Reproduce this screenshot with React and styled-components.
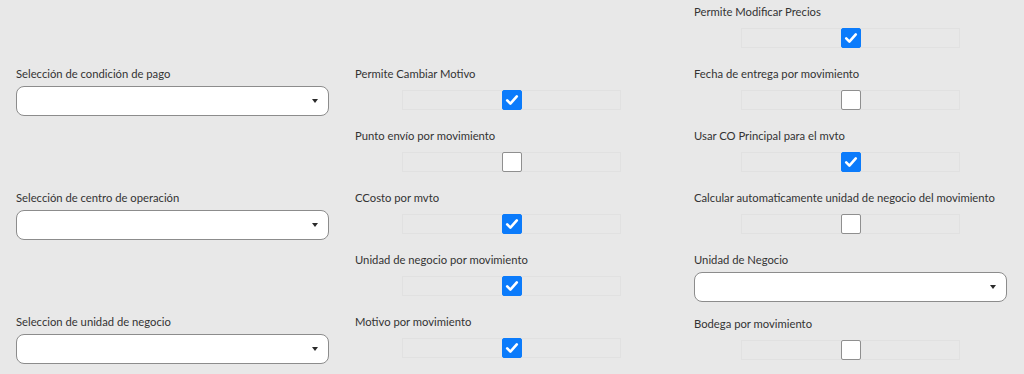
import { createGlobalStyle, styled } from "styled-components";

const GlobalStyle = createGlobalStyle`
  html, body {
    margin: 0;
    padding: 0;
    background: #e8e8e8;
  }
  body {
    font-family: Lato, "Liberation Sans", Arial, sans-serif;
    color: #333;
  }
`;

const Page = styled.div`
  display: grid;
  grid-template-columns: repeat(3, minmax(0, 1fr));
  column-gap: 26px;
  padding: 4px 17px 0 16px;
  height: 374px;
  box-sizing: border-box;
  overflow: hidden;
`;

const Column = styled.div`
  display: flex;
  flex-direction: column;
  min-width: 0;
  padding-top: ${(p) => p.$offset || 0}px;
`;

const Spacer = styled.div`
  height: ${(p) => p.$h}px;
  flex-shrink: 0;
`;

const Field = styled.div`
  display: flex;
  flex-direction: column;
  flex-shrink: 0;
  height: ${(p) => (p.$select ? 64 : 62)}px;
`;

const Label = styled.div`
  font-size: 11.25px;
  line-height: 16px;
  height: 16px;
  white-space: nowrap;
  color: #333;
  margin-bottom: ${(p) => (p.$select ? 4 : 8)}px;
`;

const CheckTrack = styled.div`
  width: 70%;
  height: 20px;
  margin: 0 auto;
  box-shadow: inset 0 0 0 1px #e1e1e1;
  display: flex;
  justify-content: center;
`;

const Box = styled.span`
  width: 20px;
  height: 20px;
  box-sizing: border-box;
  border-radius: 2px;
  display: flex;
  align-items: center;
  justify-content: center;
  background: ${(p) => (p.$checked ? "#0b7bfb" : "#ffffff")};
  border: 1px solid ${(p) => (p.$checked ? "#0b7bfb" : "#8f8f8f")};
`;

const SelectBox = styled.div`
  height: 30px;
  box-sizing: border-box;
  background: #fff;
  border: 1px solid #8c8c8c;
  border-radius: 8px;
  display: flex;
  align-items: center;
  justify-content: flex-end;
  padding-right: 10px;
`;

const Caret = styled.span`
  width: 0;
  height: 0;
  border-left: 3.5px solid transparent;
  border-right: 3.5px solid transparent;
  border-top: 4px solid #2a2a2a;
`;

function CheckField({ label, checked }) {
  return (
    <Field>
      <Label>{label}</Label>
      <CheckTrack>
        <Box $checked={checked}>
          {checked && (
            <svg width="14" height="14" viewBox="0 0 14 14">
              <path
                d="M2.2 7.4 L5.4 10.6 L11.8 3.4"
                fill="none"
                stroke="#fff"
                strokeWidth="2.6"
                strokeLinecap="round"
                strokeLinejoin="round"
              />
            </svg>
          )}
        </Box>
      </CheckTrack>
    </Field>
  );
}

function SelectField({ label }) {
  return (
    <Field $select>
      <Label $select>{label}</Label>
      <SelectBox>
        <Caret />
      </SelectBox>
    </Field>
  );
}

export default function App() {
  return (
    <>
      <GlobalStyle />
      <Page>
        <Column $offset={62}>
          <SelectField label="Selección de condición de pago" />
          <Spacer $h={60} />
          <SelectField label="Selección de centro de operación" />
          <Spacer $h={60} />
          <SelectField label="Seleccion de unidad de negocio" />
        </Column>
        <Column $offset={62}>
          <CheckField label="Permite Cambiar Motivo" checked />
          <CheckField label="Punto envío por movimiento" />
          <CheckField label="CCosto por mvto" checked />
          <CheckField label="Unidad de negocio por movimiento" checked />
          <CheckField label="Motivo por movimiento" checked />
        </Column>
        <Column>
          <CheckField label="Permite Modificar Precios" checked />
          <CheckField label="Fecha de entrega por movimiento" />
          <CheckField label="Usar CO Principal para el mvto" checked />
          <CheckField label="Calcular automaticamente unidad de negocio del movimiento" />
          <SelectField label="Unidad de Negocio" />
          <CheckField label="Bodega por movimiento" />
        </Column>
      </Page>
    </>
  );
}
